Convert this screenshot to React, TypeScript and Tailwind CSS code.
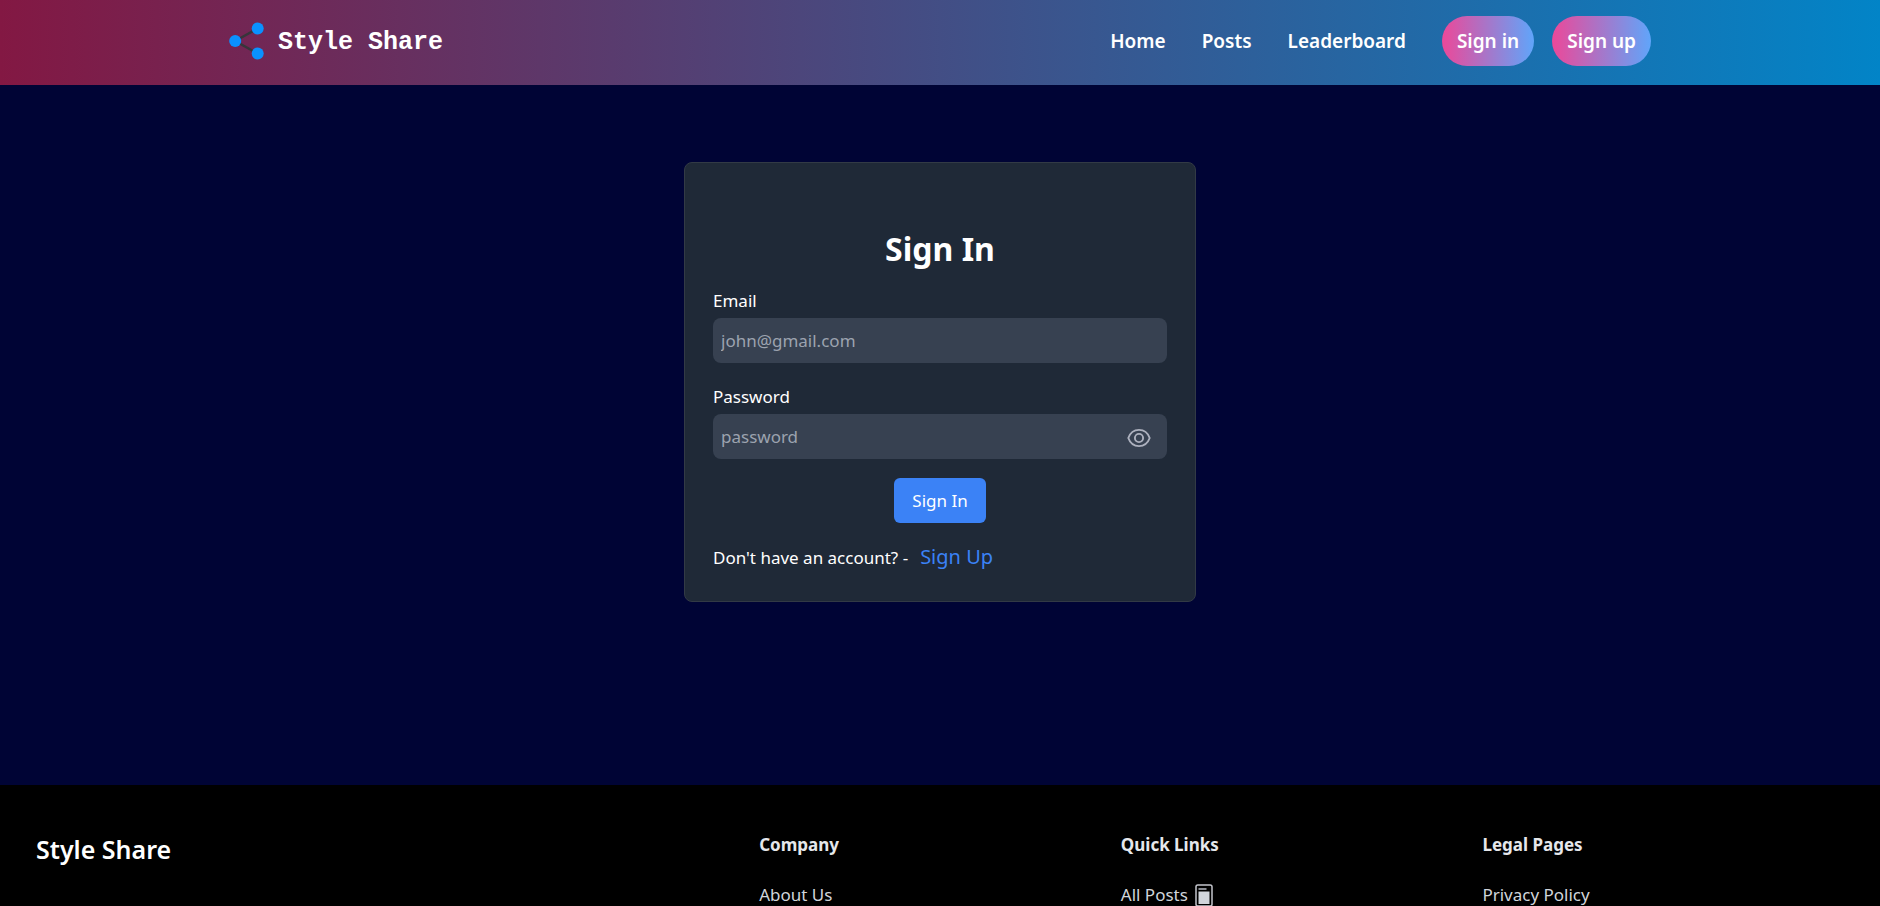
import { useState } from 'react';

const navLinks = ['Home', 'Posts', 'Leaderboard'];

function ShareLogo() {
  return (
    <svg viewBox="0 0 36 38" className="h-[38px] w-9" aria-hidden="true">
      <path d="M28.700 6.500 6.200 19l22.500 12.500" fill="none" stroke="#37353a" strokeWidth="2.500" />
      <g fill="#0a91ff">
        <circle cx="6.200" cy="19" r="6" />
        <circle cx="28.700" cy="6.500" r="6" />
        <circle cx="28.700" cy="31.500" r="6" />
      </g>
    </svg>
  );
}

function EyeIcon() {
  return (
    <svg viewBox="0 0 24 20" className="h-5 w-6" fill="none" stroke="#adb1be" strokeWidth="1.900" strokeLinejoin="round" aria-hidden="true">
      <path d="M1.300 10C3.200 4.800 7.200 1.900 12 1.900S20.800 4.800 22.700 10C20.800 15.200 16.800 18.100 12 18.100S3.200 15.200 1.300 10Z" />
      <circle cx="12" cy="10" r="4.100" />
    </svg>
  );
}

function PageIcon() {
  return (
    <svg viewBox="0 0 18 23" className="h-[23px] w-[18px]" aria-hidden="true">
      <rect x="1" y="1" width="16" height="21" rx="1.800" fill="#000" stroke="#c3c5cc" strokeWidth="1.500" />
      <path d="M3.500 5h8" stroke="#9a9ca4" strokeWidth="1.800" />
      <path d="M3.500 7.500h11v12.500h-11z" fill="#d1d5db" />
    </svg>
  );
}

function Header() {
  return (
    <header className="bg-[linear-gradient(to_right,#831843,#0284c7)] px-8">
      <div className="mx-auto flex h-[85px] max-w-[1422px] items-center justify-between pb-[3px]">
        <a href="#" className="flex items-center gap-[13px] font-['Liberation_Mono',monospace] text-[25px] font-bold">
          <ShareLogo />
          <span className="pt-1">Style Share</span>
        </a>
        <nav className="flex items-center gap-9 text-[19px] font-semibold">
          {navLinks.map((label) => (
            <a key={label} href="#">{label}</a>
          ))}
          <div className="flex gap-[18px]">
            <a href="#" className="flex h-[50px] items-center rounded-full bg-[linear-gradient(to_right,#ec4899,#60a5fa)] px-[15px]">Sign in</a>
            <a href="#" className="flex h-[50px] items-center rounded-full bg-[linear-gradient(to_right,#ec4899,#60a5fa)] px-[15px]">Sign up</a>
          </div>
        </nav>
      </div>
    </header>
  );
}

function SignInForm() {
  const [visible, setVisible] = useState(false);
  return (
    <form
      onSubmit={(event) => event.preventDefault()}
      className="w-full max-w-[512px] rounded-lg border border-[#323a45] bg-[#1f2937] px-7 pt-16 pb-[30px] text-[17px] leading-6"
    >
      <h1 className="mb-[18px] text-center text-[32px] leading-[44px] font-bold">Sign In</h1>
      <label htmlFor="email" className="mb-[5px] block">Email</label>
      <input
        id="email"
        type="email"
        placeholder="john@gmail.com"
        className="mb-[22px] block h-[45px] w-full rounded-lg bg-[#374151] px-2 outline-none placeholder:text-[#9ca3af]"
      />
      <label htmlFor="password" className="mb-[5px] block">Password</label>
      <div className="flex h-[45px] items-center rounded-lg bg-[#374151] pr-4">
        <input
          id="password"
          type={visible ? 'text' : 'password'}
          placeholder="password"
          className="h-full min-w-0 flex-1 bg-transparent px-2 outline-none placeholder:text-[#9ca3af]"
        />
        <button type="button" aria-label="Show password" className="pt-[3px]" onClick={() => setVisible(!visible)}>
          <EyeIcon />
        </button>
      </div>
      <button type="submit" className="mx-auto mt-[19px] block h-[45px] rounded-md bg-[#3b82f6] px-[18px]">Sign In</button>
      <p className="mt-5 flex items-baseline gap-3">
        Don't have an account? -
        <a href="#" className="text-xl text-[#3b82f6]">Sign Up</a>
      </p>
    </form>
  );
}

function Footer() {
  return (
    <footer className="grid grid-cols-5 bg-black px-9 pt-[50px] pb-px text-[17px] leading-5 text-[#d1d5db]">
      <h2 className="col-span-2 text-[25px] leading-7 font-semibold text-white">Style Share</h2>
      <div className="flex flex-col gap-[30px]">
        <h3 className="font-bold text-[#e5e7eb]">Company</h3>
        <a href="#">About Us</a>
      </div>
      <div className="flex flex-col gap-[30px]">
        <h3 className="font-bold text-[#e5e7eb]">Quick Links</h3>
        <a href="#" className="flex h-5 items-center gap-[7px]">
          All Posts
          <PageIcon />
        </a>
      </div>
      <div className="flex flex-col gap-[30px]">
        <h3 className="font-bold text-[#e5e7eb]">Legal Pages</h3>
        <a href="#">Privacy Policy</a>
      </div>
    </footer>
  );
}

export default function App() {
  return (
    <div className="flex min-h-screen flex-col bg-[#000435] font-['Noto_Sans',sans-serif] text-white">
      <Header />
      <main className="flex flex-1 items-start justify-center px-4 pt-[77px] pb-[181px]">
        <SignInForm />
      </main>
      <Footer />
    </div>
  );
}
